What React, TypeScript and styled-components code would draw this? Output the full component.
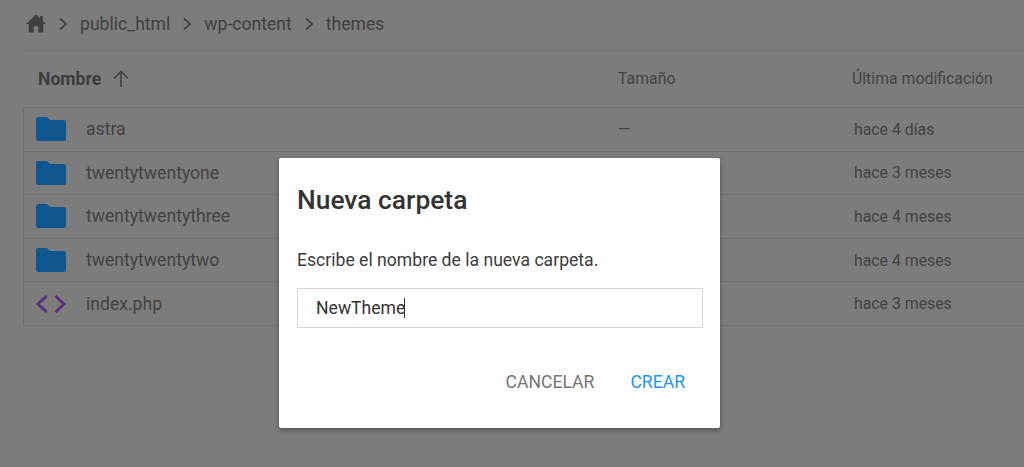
import React from "react";
import styled, { createGlobalStyle } from "styled-components";

const Global = createGlobalStyle`
  html, body { margin: 0; padding: 0; height: 100%; overflow: hidden; background: #7c7c7c; }
  body { font-family: Roboto, "Liberation Sans", sans-serif; color: #3d3d3d; }
`;
const Page = styled.div`
  width: 1024px; height: 467px; position: relative; overflow: hidden; background: #7c7c7c;
  padding-left: 23px; box-sizing: border-box;
`;
const Breadcrumb = styled.nav`
  height: 51px; display: flex; align-items: center; gap: 12px; padding: 0 0 3px 3px;
  box-sizing: border-box; border-bottom: 1px solid #767676; font-size: 17.6px; color: #404040;
`;
const Crumb = styled.span``;
const HeaderRow = styled.div`
  height: 56px; display: grid; grid-template-columns: 595px 234px 1fr; align-items: center;
  font-size: 15.84px; color: #434343; padding-bottom: 1px; box-sizing: border-box;
`;
const NameHead = styled.div`
  display: flex; align-items: center; gap: 11px; padding-left: 15px; font-size: 17.6px; font-weight: 700; color: #3c3c3c;
`;
const HeadCell = styled.div``;
const Table = styled.div`border-top: 1px solid #707070; border-left: 1px solid #707070;`;
const Row = styled.div`
  height: 43.6px; box-sizing: border-box; display: grid; grid-template-columns: 594px 236px 1fr;
  align-items: center; border-bottom: 1px solid #707070; font-size: 15.84px; color: #424242;
`;
const NameCell = styled.div`display: flex; align-items: center; gap: 20px; padding-left: 12px; font-size: 17.6px;`;
const Overlay = styled.div`
  position: absolute; inset: 0; display: flex; align-items: flex-start; padding: 158px 0 0 279px; box-sizing: border-box;
`;
const Modal = styled.div`
  width: 441px; height: 270px; background: #fff; border-radius: 2px; box-sizing: border-box;
  padding: 26px 18px 0; display: flex; flex-direction: column;
  box-shadow: 0 2px 5px rgba(0,0,0,0.35);
`;
const Title = styled.h2`margin: 0; font-size: 26.4px; line-height: 32px; font-weight: 500; color: #333;`;
const Text = styled.p`margin: 32px 0 0; font-size: 17.6px; line-height: 24px; color: #3c3c3c;`;
const Input = styled.div`
  margin-top: 16px; width: 406px; height: 40px; box-sizing: border-box; border: 1px solid #d4d4d4; border-radius: 2px;
  display: flex; align-items: center; padding-left: 18px; font-size: 17.6px; color: #333;
`;
const Caret = styled.span`width: 1px; height: 20px; background: #333; margin-left: -1px;`;
const Actions = styled.div`display: flex; justify-content: flex-end; gap: 36px; padding: 44px 17px 0 0;`;
const Action = styled.button<{ $primary?: boolean }>`
  border: 0; background: none; padding: 0; font: 400 17.6px/20px Roboto, sans-serif;
  color: ${p => (p.$primary ? "#2196f3" : "#757575")};
`;

const Chevron = () => (
  <svg width="10" height="14" viewBox="0 0 10 14" fill="none" stroke="#444" strokeWidth="1.8"><path d="M2 1.5 8 7l-6 5.5" /></svg>
);
const Folder = () => (
  <svg width="30" height="24" viewBox="0 0 30 24"><path fill="#10568f" d="M2.5 0H11l3 3h13.5A2.5 2.5 0 0 1 30 5.500V21.500A2.500 2.500 0 0 1 27.500 24H2.500A2.500 2.500 0 0 1 0 21.500V2.500A2.500 2.500 0 0 1 2.500 0Z" /></svg>
);
const Code = () => (
  <svg width="30" height="24" viewBox="0 0 30 24" fill="none" stroke="#5c2a7e" strokeWidth="2.6"><path d="M10.500 4 1.800 12l8.700 8M19.500 4l8.700 8-8.700 8" /></svg>
);

const files = [
  { n: "astra", s: "—", d: "hace 4 días" },
  { n: "twentytwentyone", s: "", d: "hace 3 meses" },
  { n: "twentytwentythree", s: "", d: "hace 4 meses" },
  { n: "twentytwentytwo", s: "", d: "hace 4 meses" },
  { n: "index.php", s: "", d: "hace 3 meses", code: true },
];

export default function App() {
  return (
    <Page>
      <Global />
      <Breadcrumb>
        <svg width="20" height="19" viewBox="0 0 22 20" preserveAspectRatio="none"><path fill="#3f3f3f" d="M11 .5 0 10.500h3V19.500h5.500V13h5v6.500H19V10.500h3l-3.500-3.200V2h-3v2.600Z" /></svg>
        <Chevron /><Crumb>public_html</Crumb>
        <Chevron /><Crumb>wp-content</Crumb>
        <Chevron /><Crumb>themes</Crumb>
      </Breadcrumb>
      <HeaderRow>
        <NameHead>Nombre
          <svg width="18" height="18" viewBox="0 0 18 18" fill="none" stroke="#444" strokeWidth="1.700"><path d="M9 17V2M2 8.500 9 1.500l7 7" /></svg>
        </NameHead>
        <HeadCell>Tamaño</HeadCell>
        <HeadCell>Última modificación</HeadCell>
      </HeaderRow>
      <Table>
        {files.map(f => (
          <Row key={f.n}>
            <NameCell>{f.code ? <Code /> : <Folder />}{f.n}</NameCell>
            <div>{f.s}</div>
            <div>{f.d}</div>
          </Row>
        ))}
      </Table>
      <Overlay>
        <Modal>
          <Title>Nueva carpeta</Title>
          <Text>Escribe el nombre de la nueva carpeta.</Text>
          <Input>NewTheme<Caret /></Input>
          <Actions>
            <Action>CANCELAR</Action>
            <Action $primary>CREAR</Action>
          </Actions>
        </Modal>
      </Overlay>
    </Page>
  );
}
